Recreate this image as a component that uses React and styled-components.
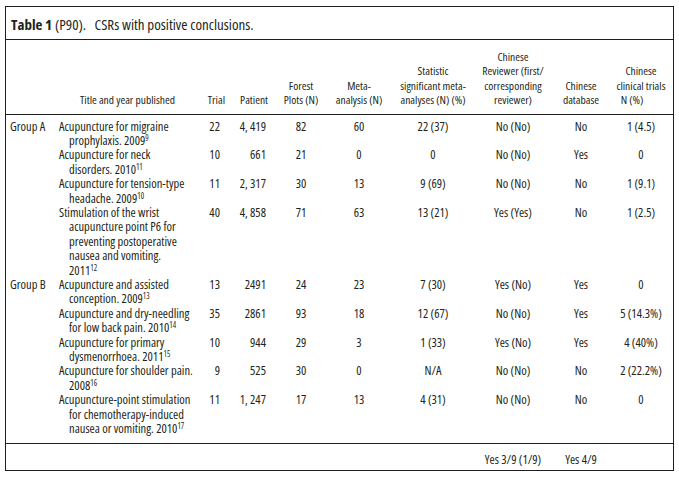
import React from "react";
import styled, { createGlobalStyle } from "styled-components";

const Global = createGlobalStyle`
  html, body { margin: 0; padding: 0; background: #ffffff; }
  body {
    font-family: "Open Sans", "Liberation Sans", Arial, sans-serif;
    font-stretch: 75%;
    color: #231f20;
  }
`;

const COLS = "51px 141px 34px 44px 50px 66px 82px 78px 58px 62px";

const Frame = styled.div`
  box-sizing: border-box;
  width: 669px;
  margin: 6px 0 0 5px;
  border: 1px solid #1e1e1e;
`;

const Caption = styled.div`
  padding: 9px 5px 7px;
  border-bottom: 1px solid #1e1e1e;
  font-size: 15px;
  line-height: 16px;
  white-space: pre;
`;

const Bold = styled.b`
  font-weight: 700;
`;

const Grid = styled.div`
  display: grid;
  grid-template-columns: ${COLS};
  font-size: 12.5px;
  font-stretch: 78%;
  line-height: 14.4px;
  white-space: nowrap;
`;

const HeaderGrid = styled(Grid)`
  box-sizing: border-box;
  height: 75px;
  align-items: end;
  padding-bottom: 6.5px;
  border-bottom: 1px solid #1e1e1e;
  font-size: 11.5px;
  font-stretch: 75%;
`;

const BodyGrid = styled(Grid)`
  padding: 4.5px 0 6.7px;
  border-bottom: 1px solid #1e1e1e;
  align-items: start;
`;

const FooterGrid = styled(Grid)`
  box-sizing: border-box;
  height: 26px;
  padding-top: 8.8px;
`;

const Cell = styled.div`
  text-align: ${(p) => p.$align || "center"};
  padding-left: ${(p) => p.$pl || 0}px;
  padding-right: ${(p) => p.$pr || 0}px;
  grid-column: ${(p) => p.$col || "auto"};
`;

const TitleCell = styled.div`
  padding-left: 12px;
  text-indent: -10px;
`;

const Sup = styled.sup`
  font-size: 8px;
  line-height: 0;
  vertical-align: 4px;
`;

const Shift = styled.span`
  padding-right: ${(p) => p.$pr}px;
`;

const rows = [
  { group: "Group A", title: ["Acupuncture for migraine", "prophylaxis. 2009"], sup: "9", trial: "22", patient: "4, 419", forest: "82", meta: "60", stat: "22 (37)", rev: "No (No)", db: "No", ct: "1 (4.5)" },
  { title: ["Acupuncture for neck", "disorders. 2010"], sup: "11", trial: "10", patient: "661", forest: "21", meta: "0", stat: "0", rev: "No (No)", db: "Yes", ct: "0" },
  { title: ["Acupuncture for tension-type", "headache. 2009"], sup: "10", trial: "11", patient: "2, 317", forest: "30", meta: "13", stat: "9 (69)", rev: "No (No)", db: "No", ct: "1 (9.1)" },
  { title: ["Stimulation of the wrist", "acupuncture point P6 for", "preventing postoperative", "nausea and vomiting.", "2011"], sup: "12", trial: "40", patient: "4, 858", forest: "71", meta: "63", stat: "13 (21)", rev: "Yes (Yes)", db: "No", ct: "1 (2.5)" },
  { group: "Group B", title: ["Acupuncture and assisted", "conception. 2009"], sup: "13", trial: "13", patient: "2491", forest: "24", meta: "23", stat: "7 (30)", rev: "Yes (No)", db: "Yes", ct: "0" },
  { title: ["Acupuncture and dry-needling", "for low back pain. 2010"], sup: "14", trial: "35", patient: "2861", forest: "93", meta: "18", stat: "12 (67)", rev: "No (No)", db: "Yes", ct: "5 (14.3%)" },
  { title: ["Acupuncture for primary", "dysmenorrhoea. 2011"], sup: "15", trial: "10", patient: "944", forest: "29", meta: "3", stat: "1 (33)", rev: "Yes (No)", db: "Yes", ct: "4 (40%)" },
  { title: ["Acupuncture for shoulder pain.", "2008"], sup: "16", trial: "9", patient: "525", forest: "30", meta: "0", stat: "N/A", rev: "No (No)", db: "No", ct: "2 (22.2%)" },
  { title: ["Acupuncture-point stimulation", "for chemotherapy-induced", "nausea or vomiting. 2010"], sup: "17", trial: "11", patient: "1, 247", forest: "17", meta: "13", stat: "4 (31)", rev: "No (No)", db: "No", ct: "0" },
];

function Title({ lines, sup }) {
  return (
    <TitleCell>
      {lines.map((l, i) => (
        <React.Fragment key={i}>
          {i > 0 && <br />}
          {l}
          {i === lines.length - 1 && <Sup>{sup}</Sup>}
        </React.Fragment>
      ))}
    </TitleCell>
  );
}

export default function App() {
  return (
    <>
      <Global />
      <Frame>
        <Caption>
          <Bold>Table 1</Bold> (P90).   CSRs with positive conclusions.
        </Caption>
        <HeaderGrid>
          <Cell />
          <Cell>Title and year published</Cell>
          <Cell $align="right" $pr={7}>Trial</Cell>
          <Cell $align="right" $pr={8}>Patient</Cell>
          <Cell>Forest<br />Plots (N)</Cell>
          <Cell>Meta-<br />analysis (N)</Cell>
          <Cell>Statistic<br />significant meta-<br />analyses (N) (%)</Cell>
          <Cell>Chinese<br />Reviewer (first/<br />corresponding<br />reviewer)</Cell>
          <Cell>Chinese<br />database</Cell>
          <Cell>Chinese<br />clinical trials<br /><Shift $pr={18}>N (%)</Shift></Cell>
        </HeaderGrid>
        <BodyGrid>
          {rows.map((r, i) => (
            <React.Fragment key={i}>
              <Cell $align="left" $pl={4}>{r.group || ""}</Cell>
              <Title lines={r.title} sup={r.sup} />
              <Cell $align="right" $pr={12}>{r.trial}</Cell>
              <Cell $align="right" $pr={10}>{r.patient}</Cell>
              <Cell>{r.forest}</Cell>
              <Cell>{r.meta}</Cell>
              <Cell>{r.stat}</Cell>
              <Cell>{r.rev}</Cell>
              <Cell>{r.db}</Cell>
              <Cell>{r.ct}</Cell>
            </React.Fragment>
          ))}
        </BodyGrid>
        <FooterGrid>
          <Cell $col="8">Yes 3/9 (1/9)</Cell>
          <Cell $col="9">Yes 4/9</Cell>
        </FooterGrid>
      </Frame>
    </>
  );
}
